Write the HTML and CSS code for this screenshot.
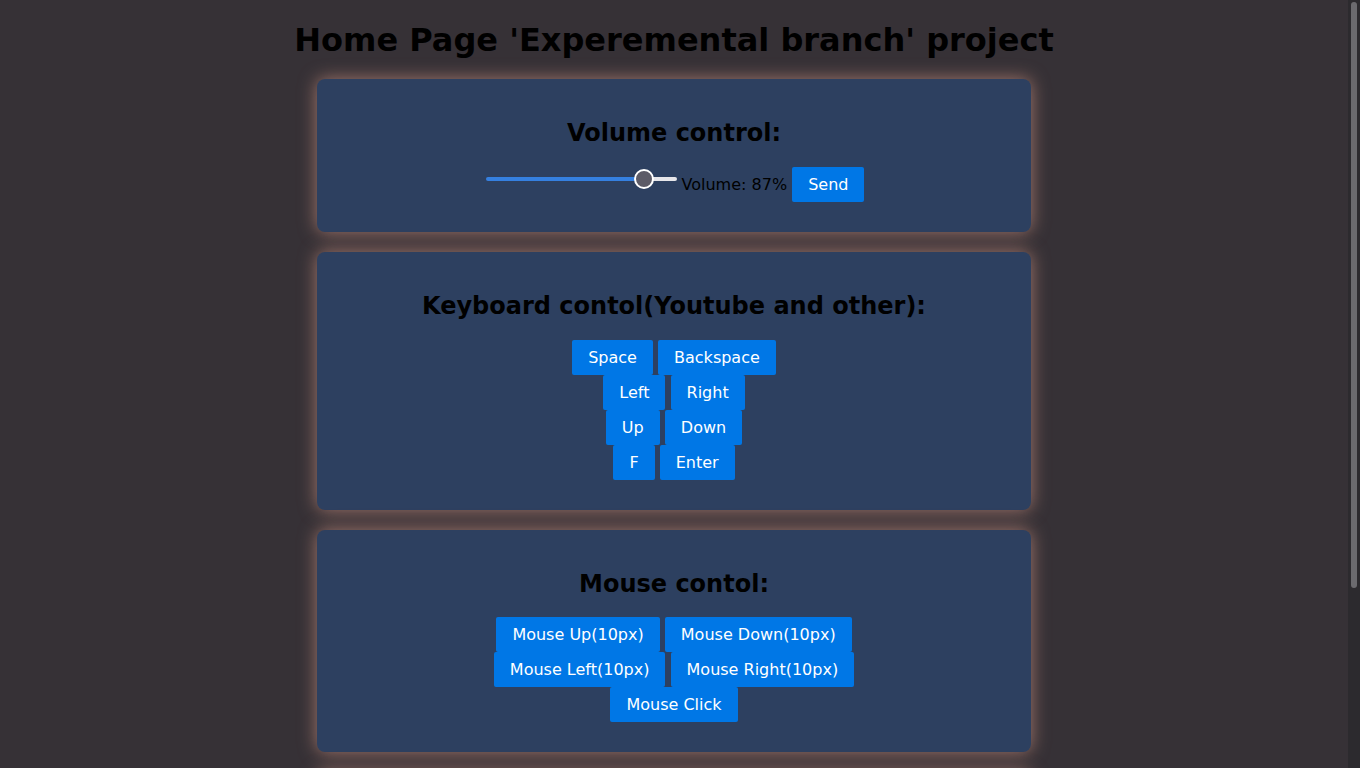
FILE: index.html
```html
<!DOCTYPE html>
<html lang="en">
<head>
<meta charset="utf-8">
<title>Home Page</title>
<link rel="stylesheet" href="styles.css">
</head>
<body>
<h1 class="title">Home Page 'Experemental branch' project</h1>

<div class="card">
  <h2 class="card-title">Volume control:</h2>
  <div class="row"><input class="volume" type="range" min="0" max="100" value="87"><span class="volume-label">Volume: 87%</span> <button class="btn">Send</button></div>
</div>

<div class="card">
  <h2 class="card-title">Keyboard contol(Youtube and other):</h2>
  <div class="row"><button class="btn">Space</button> <button class="btn">Backspace</button></div>
  <div class="row"><button class="btn">Left</button> <button class="btn">Right</button></div>
  <div class="row"><button class="btn">Up</button> <button class="btn">Down</button></div>
  <div class="row"><button class="btn">F</button> <button class="btn">Enter</button></div>
</div>

<div class="card">
  <h2 class="card-title">Mouse contol:</h2>
  <div class="row"><button class="btn">Mouse Up(10px)</button> <button class="btn">Mouse Down(10px)</button></div>
  <div class="row"><button class="btn">Mouse Left(10px)</button> <button class="btn">Mouse Right(10px)</button></div>
  <div class="row"><button class="btn">Mouse Click</button></div>
</div>

<div class="card">
  <div class="spacer"></div>
</div>

<div class="scrollbar"><div class="scrollbar-thumb"></div></div>
</body>
</html>
```

FILE: styles.css
```css
html {
  color-scheme: dark;
  background: #363136;
}

body {
  margin: 0 12px 0 0;
  background: #363136;
  color: #000;
  font-family: "DejaVu Sans", sans-serif;
  font-size: 16px;
}

.title {
  font-size: 32px;
  font-weight: bold;
  text-align: center;
  margin: 21px 0 19px;
  color: #000;
}

.card {
  width: 50%;
  margin: 20px auto;
  padding: 20px 20px 30px;
  background: #2d4060;
  border-radius: 8px;
  box-shadow: 0 0 18px rgba(235, 165, 145, 0.6);
  text-align: center;
}

.card-title {
  font-size: 24px;
  font-weight: bold;
  margin: 19.92px 0;
  color: #000;
}

.row {
  text-align: center;
}

.btn {
  display: inline-block;
  font-family: "DejaVu Sans", sans-serif;
  font-size: 16px;
  line-height: normal;
  color: #fff;
  background: #0077e6;
  border: none;
  border-radius: 2px;
  padding: 8px 16px;
  margin: 0;
  cursor: pointer;
}

.volume {
  -webkit-appearance: none;
  appearance: none;
  width: 191px;
  height: 16px;
  margin: 2px 5px 2px 2px;
  background: transparent;
  vertical-align: 3px;
}

.volume::-webkit-slider-runnable-track {
  height: 4px;
  border-radius: 2px;
  background: linear-gradient(to right, #3580e0 0%, #3580e0 83%, #e6e6ea 83%, #e6e6ea 100%);
}

.volume::-webkit-slider-thumb {
  -webkit-appearance: none;
  appearance: none;
  width: 20px;
  height: 20px;
  margin-top: -8px;
  border-radius: 50%;
  background: #5c5b67;
  border: 2px solid #fff;
  box-sizing: border-box;
}

.volume-label {
  color: #000;
}

.spacer {
  height: 148px;
}

.scrollbar {
  position: fixed;
  top: 0;
  right: 0;
  width: 12px;
  height: 100%;
  background: #2c2a2e;
}

.scrollbar-thumb {
  margin: 2px 3px 0;
  width: 6px;
  height: 586px;
  border-radius: 3px;
  background: #6b6a6e;
}
```
